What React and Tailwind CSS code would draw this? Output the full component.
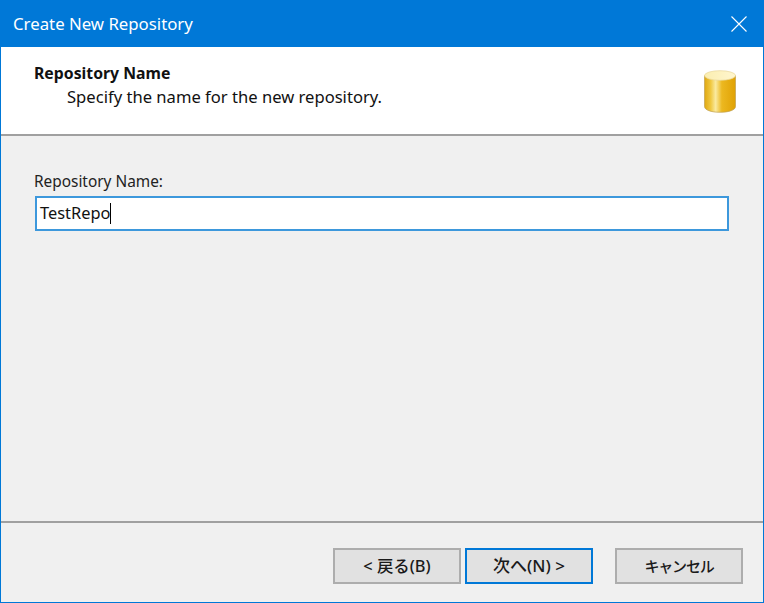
const font = "font-['Noto_Sans','Noto_Sans_CJK_JP',sans-serif]";

function RepoIcon() {
  return (
    <svg width="34" height="46" viewBox="0 0 34 46" className="block">
      <defs>
        <linearGradient id="body" x1="0" x2="1" y1="0" y2="0">
          <stop offset="0" stopColor="#dfa812" />
          <stop offset="0.2" stopColor="#f0c840" />
          <stop offset="0.36" stopColor="#faeaa0" />
          <stop offset="0.56" stopColor="#ecb820" />
          <stop offset="1" stopColor="#e0a204" />
        </linearGradient>
        <linearGradient id="lid" x1="0" x2="1" y1="0" y2="0">
          <stop offset="0" stopColor="#fbeeb0" />
          <stop offset="1" stopColor="#fff6cf" />
        </linearGradient>
      </defs>
      <path d="M1.500 7.500v31c0 3.500 6.500 5.800 15.500 5.800s15.500-2.300 15.500-5.800V7.500z" fill="url(#body)" stroke="#bfa055" strokeWidth="0.7" />
      <ellipse cx="17" cy="7.500" rx="15.500" ry="4.800" fill="url(#lid)" stroke="#ead79a" strokeWidth="0.7" />
    </svg>
  );
}

function Btn({ children, primary }) {
  return (
    <button
      className={
        primary
          ? "w-[128px] h-9 bg-[#e1e1e1] border-2 border-[#0078d7] text-[16px] text-[#1a1a1a] flex items-center justify-center"
          : "w-[128px] h-9 bg-[#e1e1e1] border-2 border-[#adadad] text-[16px] text-[#1a1a1a] flex items-center justify-center"
      }
    >
      {children}
    </button>
  );
}

export default function App() {
  return (
    <div className={`${font} w-[764px] h-[603px] flex flex-col border border-[#0078d7] bg-[#f0f0f0] overflow-hidden`}>
      {/* title bar */}
      <div className="h-[46px] shrink-0 bg-[#0078d7] flex items-center justify-between pl-3 pr-4 text-white">
        <span className="text-[16.800px]">Create New Repository</span>
        <svg width="16" height="16" viewBox="0 0 16 16" fill="none" stroke="white" strokeWidth="1.1">
          <path d="M0.500 0.500 15.500 15.500M15.500 0.500 0.500 15.500" />
        </svg>
      </div>

      {/* header */}
      <div className="h-[89px] shrink-0 bg-white flex justify-between pl-[33px] pr-[26px] border-b-2 border-[#a0a0a0]">
        <div className="pt-[15px] text-[16.600px] leading-[23px] text-[#111]">
          <div className="font-bold text-[15.800px]">Repository Name</div>
          <div className="pl-[33px]">Specify the name for the new repository.</div>
        </div>
        <div className="pt-[21px]">
          <RepoIcon />
        </div>
      </div>

      {/* body */}
      <div className="flex-1 pt-[35px] pl-[34px] pr-[34px]">
        <div className="text-[15.400px] leading-[22px] mb-[3px] -ml-px text-[#222]">Repository Name:</div>
        <div className="h-[35px] bg-white border-2 border-[#3d98dc] flex items-center pl-[3px] text-[16.400px] text-[#111]">
          <span>TestRepo</span>
          <span className="w-px h-[21px] bg-black" />
        </div>
      </div>

      {/* footer */}
      <div className="h-[81px] shrink-0 border-t-2 border-[#a0a0a0] flex items-start justify-end pt-[25px] pr-[20px]">
        <div className="flex gap-1 mr-[22px]">
          <Btn>
            <span className="text-[16.400px] font-medium">&lt; 戻る(B)</span>
          </Btn>
          <Btn primary>
            <span className="text-[17px] font-medium">次へ(N) &gt;</span>
          </Btn>
        </div>
        <Btn>
          <span className="text-[15px] font-medium tracking-[-1.200px]">キャンセル</span>
        </Btn>
      </div>
    </div>
  );
}
